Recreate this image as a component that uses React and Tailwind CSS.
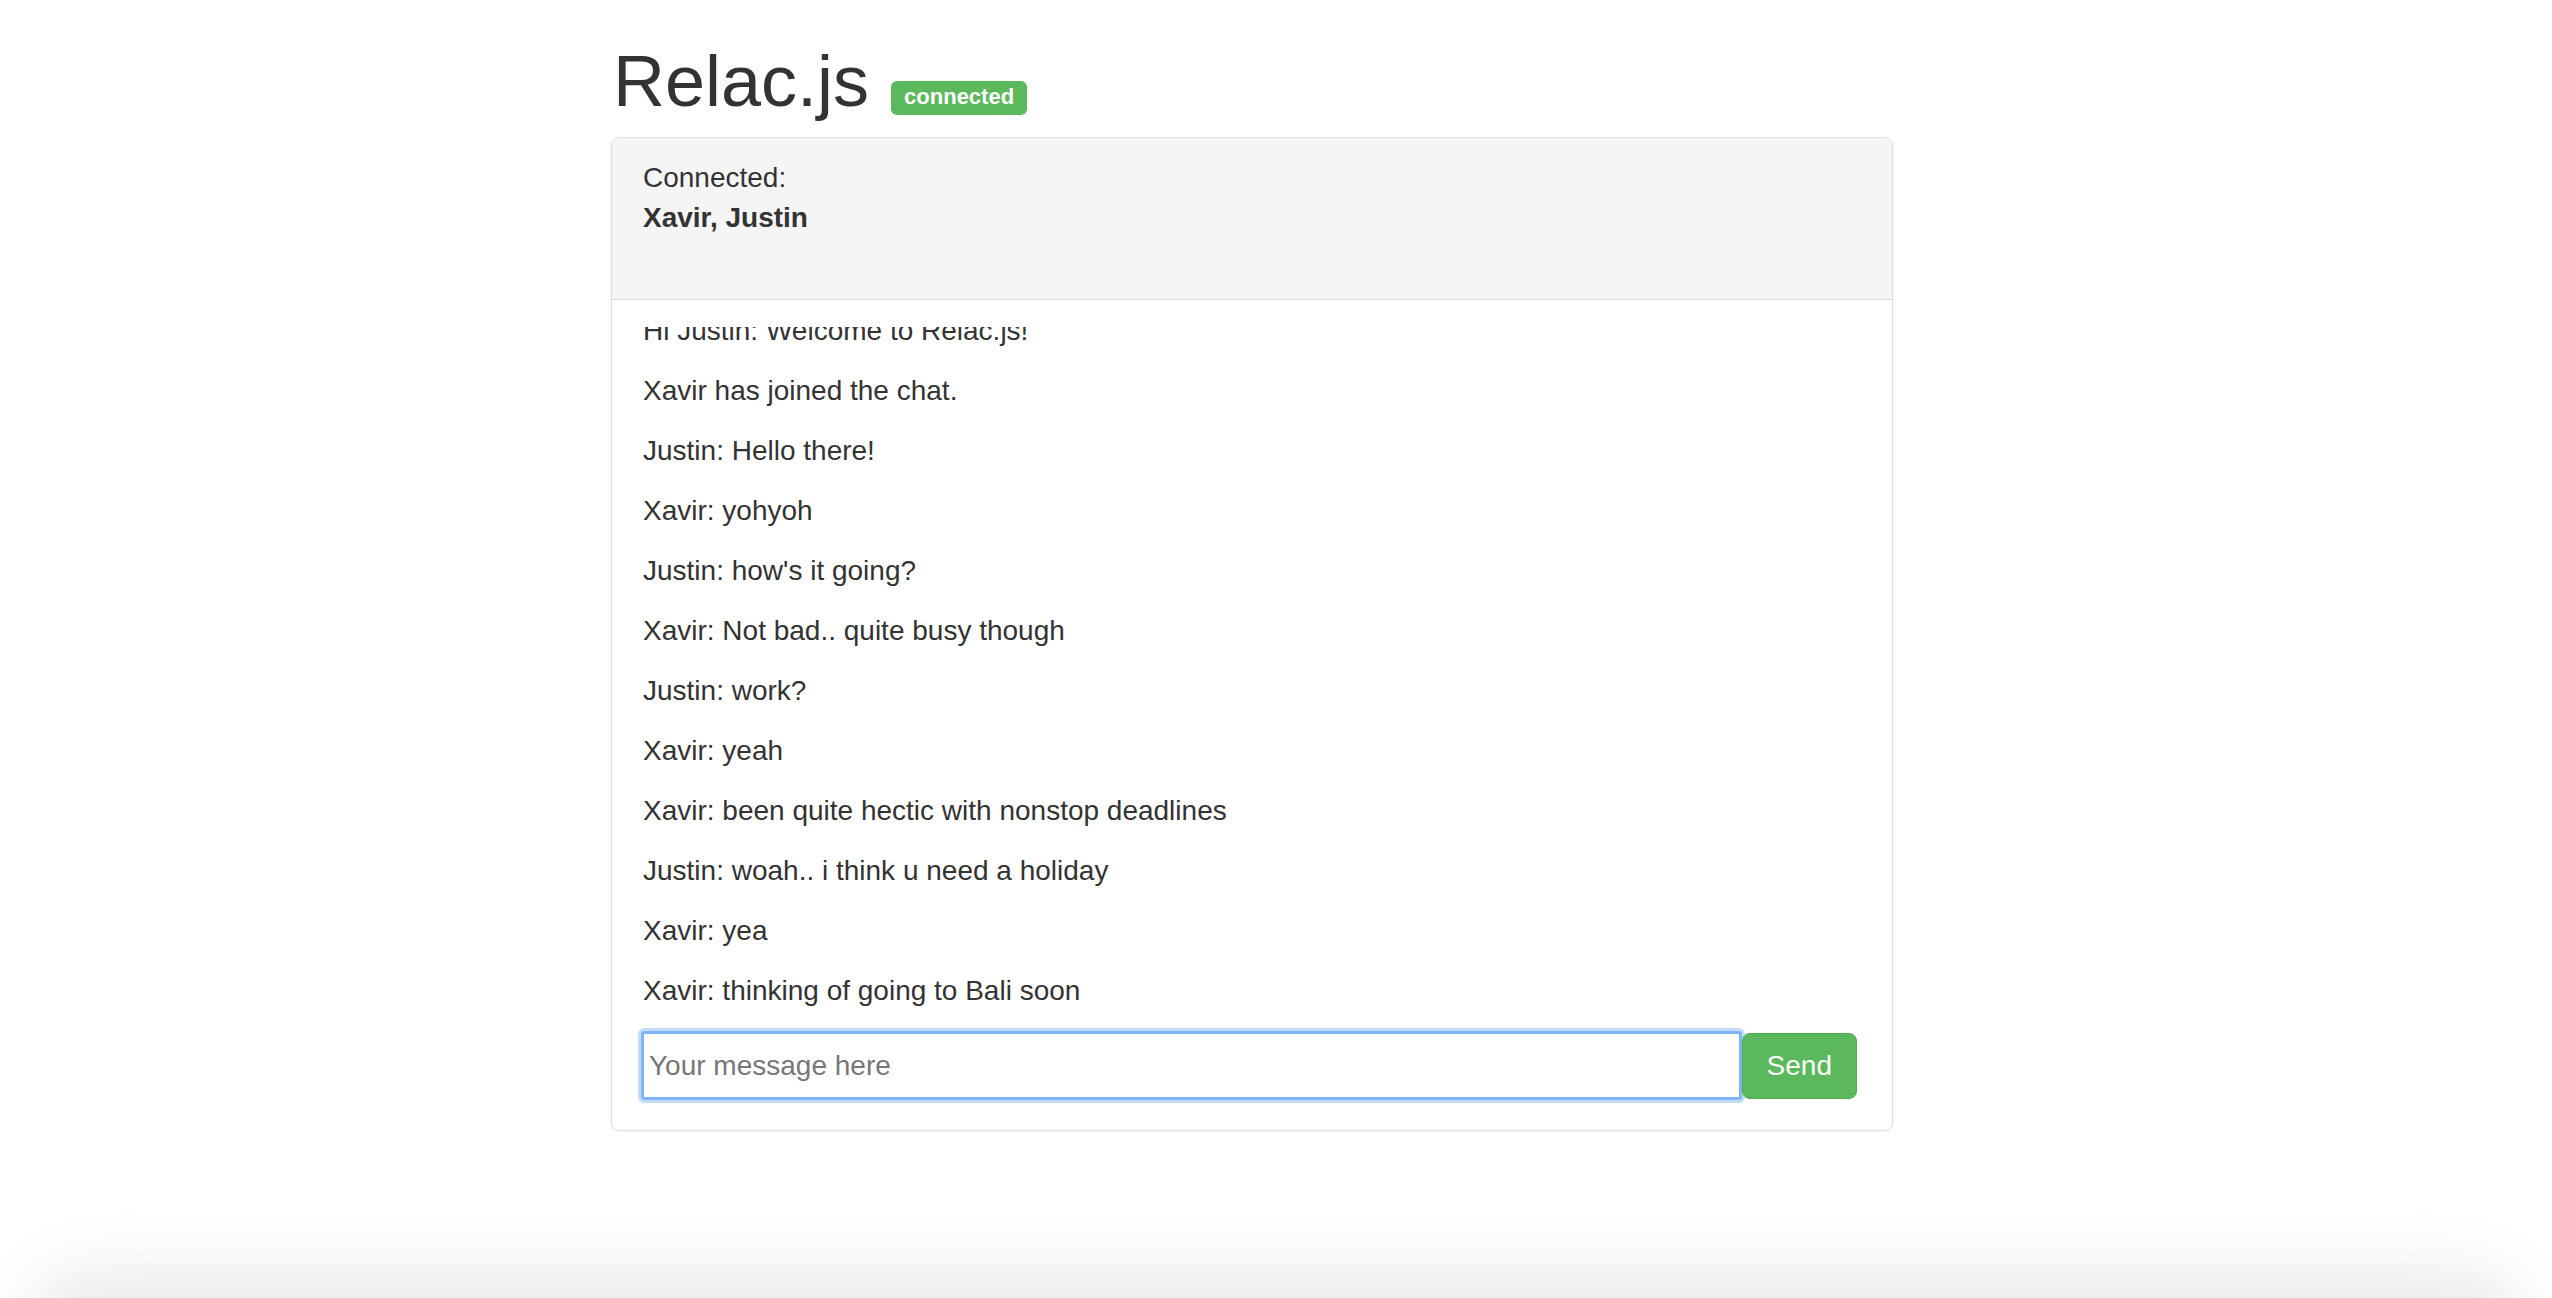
import { useLayoutEffect, useRef, useState } from 'react'

const MESSAGES = [
  'Hi Justin: Welcome to Relac.js!',
  'Xavir has joined the chat.',
  'Justin: Hello there!',
  'Xavir: yohyoh',
  "Justin: how's it going?",
  'Xavir: Not bad.. quite busy though',
  'Justin: work?',
  'Xavir: yeah',
  'Xavir: been quite hectic with nonstop deadlines',
  'Justin: woah.. i think u need a holiday',
  'Xavir: yea',
  'Xavir: thinking of going to Bali soon',
]

export default function App() {
  const [draft, setDraft] = useState('')
  const listRef = useRef(null)
  const inputRef = useRef(null)

  // keep the chat pinned to the newest message
  useLayoutEffect(() => {
    if (listRef.current) listRef.current.scrollTop = listRef.current.scrollHeight
    if (inputRef.current) inputRef.current.focus()
  }, [])

  return (
    <div className="flex flex-col h-[1298px] overflow-hidden bg-white text-[#333] font-['Liberation_Sans',Arial,sans-serif]">
      <div className="ml-[611px] w-[1282px]">
        <h1 className="flex items-start mt-[42px] mb-[16px] pl-[2px]">
          <span className="text-[72px] leading-[79px] font-normal">Relac.js</span>
          <span className="ml-[22px] mt-[39px] px-[13px] pt-[5px] pb-[7px] rounded-[6px] bg-[#5cb85c] text-white text-[22px] leading-[22px] font-bold">
            connected
          </span>
        </h1>

        <div className="border border-[#ddd] rounded-[8px] bg-white shadow-[0_1px_2px_rgba(0,0,0,0.05)]">
          {/* Who is online */}
          <div className="h-[162px] px-[31px] pt-[20px] bg-[#f5f5f5] border-b border-[#ddd] rounded-t-[7px] text-[28px] leading-[40px]">
            <div>Connected:</div>
            <div className="font-bold">Xavir, Justin</div>
          </div>

          <div className="pl-[31px] pr-[35px] pt-[27px] pb-[30px]">
            <div ref={listRef} className="h-[704px] overflow-y-auto [scrollbar-width:none]">
              {MESSAGES.map((m, i) => (
                <p key={i} className="mb-[20px] text-[28px] leading-[40px]">{m}</p>
              ))}
            </div>

            <form className="flex items-center" onSubmit={e => { e.preventDefault(); setDraft('') }}>
              <input
                ref={inputRef}
                value={draft}
                onChange={e => setDraft(e.target.value)}
                placeholder="Your message here"
                className="flex-1 h-[69px] -ml-[2px] pl-[5px] border-[3px] border-[#7db4f5] rounded-[3px] shadow-[0_0_0_3px_#c4dcfb] outline-none text-[28px] text-[#333] placeholder:text-[#777]"
              />
              <button
                type="submit"
                className="h-[66px] px-[24px] rounded-[8px] bg-[#5cb85c] border border-[#4cae4c] text-white text-[28px] leading-[40px]"
              >
                Send
              </button>
            </form>
          </div>
        </div>
      </div>

      {/* soft shade along the bottom edge */}
      <div className="mt-auto h-[85px] overflow-hidden px-[25px]">
        <div className="h-[150px] mt-[55px] rounded-[70px] bg-[#ececec] blur-[30px]" />
      </div>
    </div>
  )
}
